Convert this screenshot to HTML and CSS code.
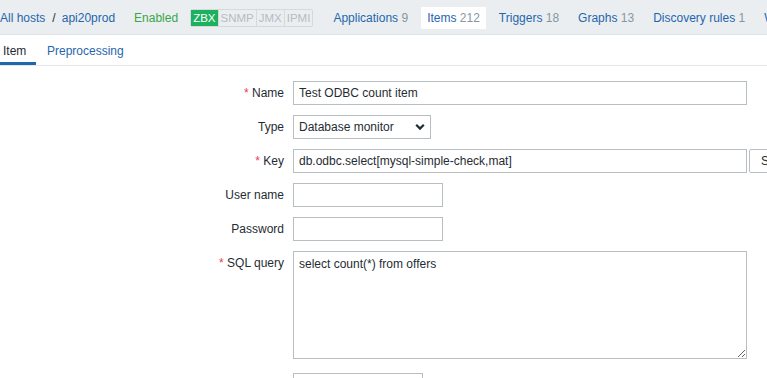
FILE: index.html
```html
<!DOCTYPE html>
<html>
<head>
<meta charset="utf-8">
<link rel="stylesheet" href="styles.css">
</head>
<body>
<div class="topbar">
  <div class="crumbs">
    <a class="link">All hosts</a>
    <span class="sep">/</span>
    <a class="link">api20prod</a>
  </div>
  <span class="enabled">Enabled</span>
  <div class="badges">
    <span class="badge on">ZBX</span><span class="badge">SNMP</span><span class="badge">JMX</span><span class="badge">IPMI</span>
  </div>
  <nav class="nav">
    <a class="nav-item">Applications <span class="cnt">9</span></a>
    <a class="nav-item active">Items <span class="cnt">212</span></a>
    <a class="nav-item">Triggers <span class="cnt">18</span></a>
    <a class="nav-item">Graphs <span class="cnt">13</span></a>
    <a class="nav-item">Discovery rules <span class="cnt">1</span></a>
    <a class="nav-item">Web scenarios</a>
  </nav>
</div>
<div class="tabs">
  <a class="tab active">Item</a>
  <a class="tab">Preprocessing</a>
</div>
<form class="form">
  <div class="row">
    <label class="lbl"><span class="req">*</span> Name</label>
    <input class="inp wide" type="text" value="Test ODBC count item">
  </div>
  <div class="row">
    <label class="lbl">Type</label>
    <div class="select">
      <span>Database monitor</span>
      <svg class="chev" width="10" height="8" viewBox="0 0 10 8"><path d="M1.2 1.8 L5 5.6 L8.8 1.8" fill="none" stroke="#1f2c33" stroke-width="2.2"/></svg>
    </div>
  </div>
  <div class="row">
    <label class="lbl"><span class="req">*</span> Key</label>
    <input class="inp wide" type="text" value="db.odbc.select[mysql-simple-check,mat]">
    <button class="btn" type="button">Select</button>
  </div>
  <div class="row">
    <label class="lbl">User name</label>
    <input class="inp small" type="text">
  </div>
  <div class="row">
    <label class="lbl">Password</label>
    <input class="inp small" type="password">
  </div>
  <div class="row top">
    <label class="lbl"><span class="req">*</span> SQL query</label>
    <textarea class="area">select count(*) from offers</textarea>
  </div>
  <div class="row last">
    <label class="lbl"></label>
    <input class="inp tiny" type="text">
  </div>
</form>
</body>
</html>
```
FILE: styles.css
```css
* { box-sizing: border-box; }
html, body { margin: 0; padding: 0; }
body {
  font-family: "Liberation Sans", Arial, sans-serif;
  font-size: 12px;
  color: #1f2c33;
  background: #fff;
  overflow: hidden;
  width: 767px;
  height: 378px;
}
.link { color: #1f66ad; }
.topbar {
  height: 35px;
  background: #ebeef0;
  border-bottom: 1px solid #dfe4e7;
  display: flex;
  align-items: center;
  white-space: nowrap;
  font-size: 12px;
  padding-top: 1px;
}
.crumbs { display: flex; align-items: center; }
.sep { color: #1f2c33; margin: 0 6px 0 7px; }
.enabled { color: #3aa64a; margin-left: 19px; }
.badges {
  display: flex;
  margin-left: 12px;
  border: 1px solid #d4d9dc;
  border-radius: 2px;
  height: 18px;
  font-size: 11.5px;
}
.badge {
  color: #b5bcc0;
  padding: 0 2px;
  line-height: 16px;
  border-left: 1px solid #d4d9dc;
}
.badge:first-child { border-left: 0; }
.badge.on { background: #1bb15e; color: #fff; padding: 0 2px; }
.nav { display: flex; margin-left: 14px; gap: 7px; }
.nav-item {
  color: #1f66ad;
  padding: 0 6px;
  height: 22px;
  line-height: 22px;
  display: block;
}
.nav-item.active { background: #fff; }
.cnt { color: #8697a0; }
.tabs {
  display: flex;
  height: 31px;
  border-bottom: 1px solid #e4e8ea;
}
.tab {
  color: #1f66ad;
  padding: 2px 0 0 3px;
  line-height: 28px;
  display: block;
  margin-right: 8px;
}
.tab.active {
  color: #1f2c33;
  width: 36px;
  padding-left: 3px;
  border-bottom: 3px solid #1f66ad;
}
.form { padding-top: 15px; }
.row {
  display: flex;
  align-items: center;
  height: 24px;
  margin-bottom: 10px;
}
.row.top { align-items: flex-start; height: 108px; margin-bottom: 14px; }
.row.top .lbl { line-height: 24px; }
.lbl {
  width: 284px;
  text-align: right;
  margin-right: 9px;
  flex: none;
}
.req { color: #e54251; }
.inp {
  flex: none;
  height: 24px;
  border: 1px solid #b8bfc3;
  background: #fff;
  font-family: "Liberation Sans", Arial, sans-serif;
  font-size: 12px;
  color: #1f2c33;
  padding: 0 5px;
  margin: 0;
  outline: none;
  border-radius: 0;
}
.wide { width: 454px; }
.small { width: 150px; }
.tiny { width: 130px; }
.select {
  flex: none;
  width: 138px;
  height: 24px;
  border: 1px solid #b8bfc3;
  display: flex;
  align-items: center;
  justify-content: space-between;
  padding: 0 5px 0 5px;
}
.btn {
  margin-left: 2px;
  height: 24px;
  border: 1px solid #b8bfc3;
  border-radius: 2px;
  background: #fff;
  font-family: "Liberation Sans", Arial, sans-serif;
  font-size: 12px;
  color: #1f2c33;
  padding: 0 11px;
  flex: none;
}
.area {
  flex: none;
  width: 454px;
  height: 108px;
  border: 1px solid #b8bfc3;
  font-family: "Liberation Sans", Arial, sans-serif;
  font-size: 12px;
  color: #1f2c33;
  padding: 5px 5px;
  margin: 0;
  resize: both;
  outline: none;
}
```
